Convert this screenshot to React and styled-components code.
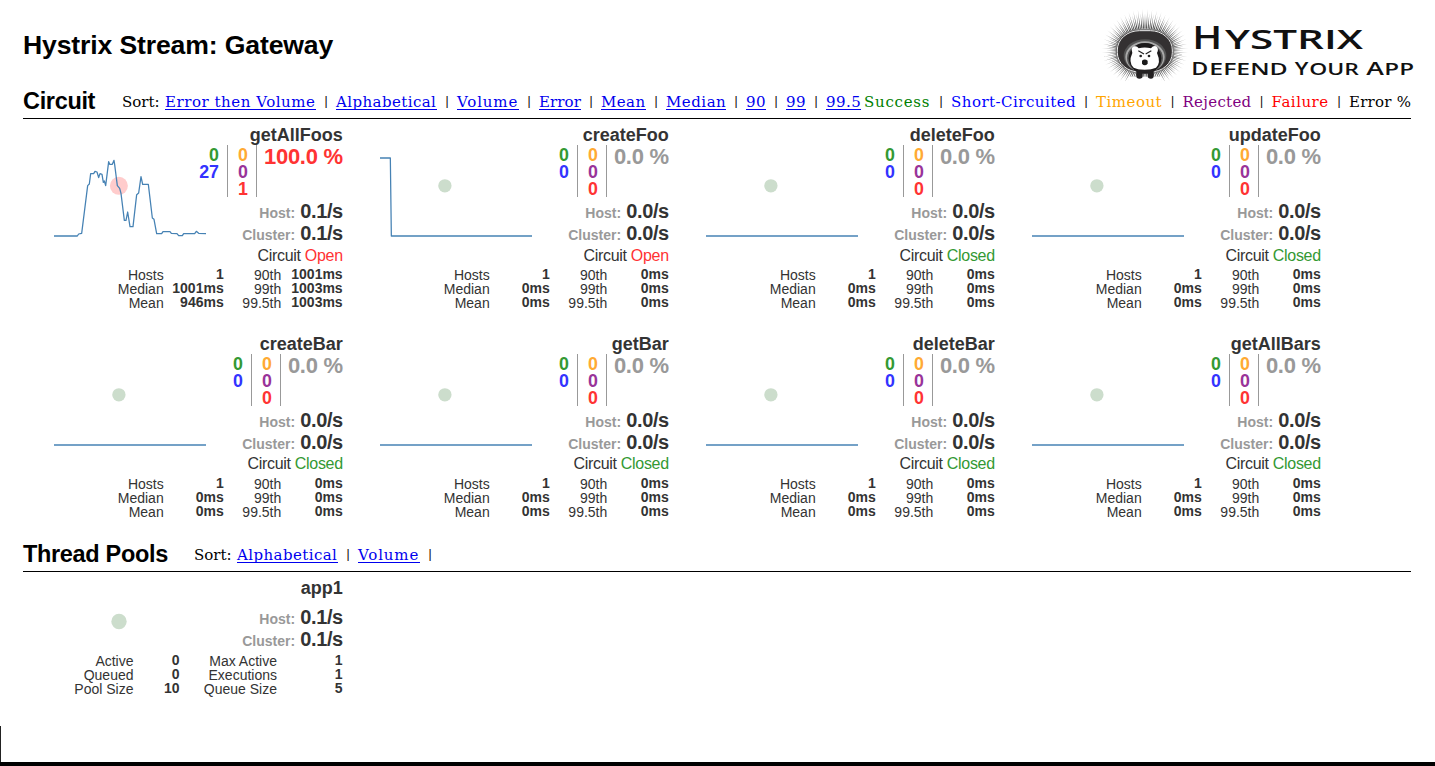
import React from 'react';
import styled, { createGlobalStyle } from 'styled-components';

const GlobalStyle = createGlobalStyle`
  body { margin: 0; background: #fff; overflow: hidden; }
`;

const sans = '"Liberation Sans", Arial, sans-serif';

const Page = styled.div`
  width: 1435px;
  height: 766px;
  display: flex;
  flex-direction: column;
  color: #333;
  font-family: ${sans};
`;
const Content = styled.main`
  height: 726px;
  box-sizing: border-box;
  padding: 0 24px 0 23px;
`;
const EdgeMark = styled.div`
  height: 36px;
  border-left: 1px solid #222;
`;
const BottomBar = styled.div`
  height: 4px;
  background: #000;
`;
const TopBar = styled.header`
  height: 84px;
  display: flex;
  justify-content: space-between;
`;
const Title = styled.h1`
  margin: 30px 0 0;
  color: #000;
  font-size: 26.6px;
  letter-spacing: -0.14px;
  line-height: 30px;
  white-space: nowrap;
`;
const LogoSvg = styled.svg`
  width: 320px;
  height: 82px;
  margin: 5px -9px 0 0;
  flex: none;
`;

const SectionHead = styled.div`
  height: 34px;
  display: flex;
  align-items: flex-start;
  border-bottom: 1px solid #000;
`;
const Heading = styled.h2`
  margin: 4px 0 0;
  width: ${(p) => p.$w}px;
  flex: none;
  color: #000;
  font-size: 23.5px;
  letter-spacing: -0.33px;
  line-height: 26px;
  white-space: nowrap;
`;
const Bar = styled.div`
  display: flex;
  padding-top: 9px;
  margin-left: ${(p) => p.$gap || 0}px;
`;
const Item = styled.span`
  width: ${(p) => p.$w}px;
  height: 16px;
  flex: none;
  color: ${(p) => p.$c || '#000'};
  font-family: "DejaVu Serif", serif;
  font-size: 15px;
  letter-spacing: ${(p) => p.$ls || 0}px;
  line-height: 18px;
  white-space: nowrap;
`;
const SortLink = styled(Item).attrs({ as: 'a' })`
  color: #0000ee;
  border-bottom: 1px solid #0000ee;
`;
const Sep = styled.span`
  width: 20px;
  flex: none;
  text-align: center;
  color: #000;
  font-size: 12px;
  line-height: 17px;
`;

const CircuitGrid = styled.div`
  height: 418px;
  box-sizing: border-box;
  padding-top: 6px;
  display: grid;
  grid-template-columns: repeat(4, 326px);
  grid-template-rows: 208.6px 203px;
`;
const Card = styled.article`
  width: 319.8px;
`;
const Name = styled.div`
  text-align: right;
  font-size: 18px;
  font-weight: bold;
  line-height: 20px;
`;
const Body = styled.div`
  display: grid;
`;
const Chart = styled.svg`
  grid-area: 1 / 1;
  width: 152px;
  height: 96px;
  margin: 5px 0 0 31px;
`;
const Stats = styled.div`
  grid-area: 1 / 1;
  justify-self: end;
  display: flex;
  flex-direction: column;
  align-items: flex-end;
`;
const Counters = styled.div`
  display: flex;
  height: 52px;
  margin-bottom: 3px;
`;
const CounterColumn = styled.div`
  display: flex;
  flex-direction: column;
  align-items: flex-end;
  box-sizing: border-box;
  min-width: ${(p) => p.$w}px;
  padding: 2px 8px 0 0;
  border-right: 1px solid #999;
  font-size: 17.8px;
  font-weight: bold;
  line-height: 17.2px;
`;
const Count = styled.span`
  color: ${(p) => p.$c};
`;
const Percent = styled.div`
  padding-left: 7px;
  color: ${(p) => (p.$hot ? '#ff3333' : '#999')};
  font-size: 22px;
  letter-spacing: -0.27px;
  font-weight: bold;
  line-height: 24px;
`;
const Rate = styled.div`
  height: 22px;
  font-size: 20px;
  letter-spacing: -0.4px;
  font-weight: bold;
  line-height: 22px;
  white-space: nowrap;
`;
const RateLabel = styled.span`
  color: #999;
  font-size: 14px;
  letter-spacing: 0;
`;
const Status = styled.div`
  height: 22px;
  margin-top: 0.8px;
  font-size: 16px;
  letter-spacing: -0.3px;
  line-height: 22px;
  white-space: nowrap;
`;
const State = styled.span`
  color: ${(p) => (p.$open ? '#ff3333' : '#339933')};
`;
const Table = styled.div`
  display: grid;
  grid-template-columns: ${(p) => p.$cols};
  margin-top: ${(p) => p.$top}px;
  text-align: right;
  font-size: 14px;
  line-height: 14px;
  white-space: nowrap;
`;
const Value = styled.b`
  height: 14px;
  line-height: 12px;
`;

const BLUE = '#4682b4';
const FLAT = '18,258 474,258';
const TRAFFIC =
  '18,258 88,258 92,252 101,250 119,107 124,102 128,71 137,71 141,64 147,66 152,83 156,71 162,73 166,97 169,93 173,107 182,35 185,43 193,43 198,31 200,44 208,107 215,115 219,130 229,211 234,211 239,186 246,230 255,230 266,134 272,129 279,80 284,103 301,103 313,204 318,208 326,251 341,251 345,245 366,245 370,250 387,251 392,257 403,257 407,251 440,251 445,244 452,250 474,251';
const DROP = '18,24 46,24 49,24 52,258 474,258';

const circuits = [
  { name: 'getAllFoos', line: TRAFFIC, ok: 0, short: 27, fail: 1, pct: '100.0 %', rate: '0.1/s', open: true, hot: true, t: ['1001ms', '946ms', '1001ms', '1003ms', '1003ms'] },
  { name: 'createFoo', line: DROP, open: true },
  { name: 'deleteFoo' },
  { name: 'updateFoo' },
  { name: 'createBar' },
  { name: 'getBar' },
  { name: 'deleteBar' },
  { name: 'getAllBars' },
];

function Rates({ rate }) {
  return (
    <>
      <Rate><RateLabel>Host:</RateLabel> {rate}</Rate>
      <Rate><RateLabel>Cluster:</RateLabel> {rate}</Rate>
    </>
  );
}

function Rows({ rows, cols, top }) {
  return (
    <Table $cols={cols} $top={top}>
      {rows.map(([a, av, b, bv]) => (
        <React.Fragment key={a}>
          <span>{a}</span>
          <Value>{av}</Value>
          <span>{b}</span>
          <Value>{bv}</Value>
        </React.Fragment>
      ))}
    </Table>
  );
}

function Circuit({ name, line = FLAT, ok = 0, short = 0, fail = 0, pct = '0.0 %', rate = '0.0/s', open, hot, t = ['0ms', '0ms', '0ms', '0ms', '0ms'] }) {
  return (
    <Card>
      <Name>{name}</Name>
      <Body>
        <Chart viewBox="18 0 456 288">
          <circle cx="212.7" cy="107.4" r={hot ? 27 : 20} fill={hot ? '#ffcccc' : '#ccddcc'} />
          <polyline points={line} fill="none" stroke={BLUE} strokeWidth="3.8" strokeLinejoin="round" />
        </Chart>
        <Stats>
          <Counters>
            <CounterColumn $w={29}>
              <Count $c="#339933">{ok}</Count>
              <Count $c="#3333ff">{short}</Count>
            </CounterColumn>
            <CounterColumn $w={29}>
              <Count $c="#ffaa33">0</Count>
              <Count $c="#993399">0</Count>
              <Count $c="#ff3333">{fail}</Count>
            </CounterColumn>
            <Percent $hot={hot}>{pct}</Percent>
          </Counters>
          <Rates rate={rate} />
          <Status>Circuit <State $open={open}>{open ? 'Open' : 'Closed'}</State></Status>
        </Stats>
      </Body>
      <Rows
        top={1.6}
        cols="140.7px 60px 57.6px 61.4px"
        rows={[
          ['Hosts', '1', '90th', t[2]],
          ['Median', t[0], '99th', t[3]],
          ['Mean', t[1], '99.5th', t[4]],
        ]}
      />
    </Card>
  );
}

const PoolRates = styled(Stats)`
  padding-top: 8px;
`;
const PoolCard = styled(Card)`
  padding-top: 6px;
`;
const PoolChart = styled(Chart)`
  height: 50px;
  margin-top: 0;
`;

const rays = Array.from({ length: 112 }, (_, i) => {
  const a = (i / 112) * Math.PI * 2;
  const long = i % 2 ? 1 : 0.9;
  const up = Math.sin(a) < 0 ? 126 : 112;
  const x = (r, d = 0) => (135 + r * Math.cos(a + d)).toFixed(1);
  const y = (r, d = 0) => (137 + r * Math.sin(a + d)).toFixed(1);
  return `M${x(84, -0.019)} ${y(66, -0.019)}L${x(130 * long)} ${y(up * long)}L${x(84, 0.019)} ${y(66, 0.019)}Z`;
}).join('');

const Word = styled.text`
  font-family: "Open Sans", ${sans};
  font-weight: 600;
  font-size: ${(p) => p.$size}px;
  fill: #111;
`;

function W({ x, y, w, cap, children }) {
  return (
    <Word x={x} y={y} $size={cap / 0.714} textLength={w} lengthAdjust="spacingAndGlyphs">
      {children}
    </Word>
  );
}

function Logo() {
  return (
    <LogoSvg viewBox="0 0 960 246">
      <defs>
        <radialGradient id="fur" gradientUnits="userSpaceOnUse" cx="0" cy="0" r="1" gradientTransform="translate(135 137) scale(132 126)">
          <stop offset="0.6" stopColor="#444" />
          <stop offset="1" stopColor="#ccc" />
        </radialGradient>
        <clipPath id="ground"><path d="M0 0H270V229H185V215H85V229H0Z" /></clipPath>
      </defs>
      <path d={rays} fill="url(#fur)" clipPath="url(#ground)" />
      <rect x="48" y="73" width="173" height="131" rx="70" ry="62" fill="#343132" stroke="#888" strokeWidth="3" />
      <rect x="52" y="77" width="165" height="124" rx="66" ry="58" fill="none" stroke="#eee" strokeWidth="3" />
      <ellipse cx="135" cy="152" rx="64" ry="49" fill="#555" />
      <ellipse cx="135" cy="156" rx="59" ry="47" fill="#aaa" />
      <ellipse cx="135" cy="159" rx="54" ry="45" fill="#555" />
      <ellipse cx="135" cy="160" rx="49" ry="46" fill="#1c1a1b" />
      <path d="M97 144Q91 126 103 124Q111 122 116 130Q134 125 153 130Q160 121 168 124Q178 131 171 144Q184 174 168 188Q151 195 134 195Q115 195 101 188Q84 173 97 144Z" fill="#fff" />
      <path d="M109 194H161V214Q161 221 153 221Q143 221 143 214V203H128V214Q128 221 118 221Q109 221 109 214Z" fill="#242122" />
      <path d="M115 137L132 147M154 137L137 147" stroke="#222" strokeWidth="3.5" />
      <circle cx="122" cy="153" r="4" fill="#222" />
      <circle cx="147" cy="153" r="4" fill="#222" />
      <path d="M126 167Q134 160 143 167V176Q134 186 126 176Z" fill="#1a1a1a" />
      <W x="277" y="133" w="90" cap="68">H</W>
      <W x="375" y="133" w="414" cap="58">YSTRIX</W>
      <W x="274" y="211" w="51" cap="39">D</W>
      <W x="328" y="211" w="235" cap="34">EFEND</W>
      <W x="584" y="211" w="41" cap="39">Y</W>
      <W x="628" y="211" w="149" cap="34">OUR</W>
      <W x="799" y="211" w="53" cap="39">A</W>
      <W x="853" y="211" w="89" cap="34">PP</W>
    </LogoSvg>
  );
}

const sorts = [
  ['Error then Volume', 151, 0.54], ['Alphabetical', 101, 0.42], ['Volume', 62, 0.85], ['Error', 42, 0.1], ['Mean', 45, 0.4],
  ['Median', 60, 0.5], ['90', 20, 0.4], ['99', 20, 0.4], ['99.5', 35, 0.5],
];
const legend = [
  ['Success', 67, '#008000', 0.75], ['Short-Circuited', 125, '#0000ff', 0.47], ['Timeout', 66.5, '#ffa500', 0.5],
  ['Rejected', 69, '#800080', 0.3], ['Failure', 57.5, '#ff0000', 0.5], ['Error %', 62, '#000', 0.25],
];

export default function App() {
  return (
    <Page>
      <GlobalStyle />
      <Content>
        <TopBar>
          <Title>Hystrix Stream: Gateway</Title>
          <Logo />
        </TopBar>
        <SectionHead>
          <Heading $w={99}>Circuit</Heading>
          <Bar>
            <Item $w={43}>Sort:</Item>
            {sorts.map(([label, w, ls], i) => (
              <React.Fragment key={label}>
                {i > 0 && <Sep>|</Sep>}
                <SortLink $w={w} $ls={ls}>{label}</SortLink>
              </React.Fragment>
            ))}
          </Bar>
          <Bar $gap={3}>
            {legend.map(([label, w, c, ls], i) => (
              <React.Fragment key={label}>
                {i > 0 && <Sep>|</Sep>}
                <Item $w={w} $c={c} $ls={ls}>{label}</Item>
              </React.Fragment>
            ))}
          </Bar>
        </SectionHead>
        <CircuitGrid>
          {circuits.map((c) => <Circuit key={c.name} {...c} />)}
        </CircuitGrid>
        <SectionHead>
          <Heading $w={171}>Thread Pools</Heading>
          <Bar>
            <Item $w={43}>Sort:</Item>
            <SortLink $w={101} $ls={0.42}>Alphabetical</SortLink>
            <Sep>|</Sep>
            <SortLink $w={62} $ls={0.85}>Volume</SortLink>
            <Sep>|</Sep>
          </Bar>
        </SectionHead>
        <PoolCard>
          <Name>app1</Name>
          <Body>
            <PoolChart viewBox="0 0 152 50">
              <circle cx="65" cy="23.5" r="7.7" fill="#ccddcc" />
            </PoolChart>
            <PoolRates><Rates rate="0.1/s" /></PoolRates>
          </Body>
          <Rows
            top={4}
            cols="110.5px 46px 97.5px 65.5px"
            rows={[
              ['Active', '0', 'Max Active', '1'],
              ['Queued', '0', 'Executions', '1'],
              ['Pool Size', '10', 'Queue Size', '5'],
            ]}
          />
        </PoolCard>
      </Content>
      <EdgeMark />
      <BottomBar />
    </Page>
  );
}
